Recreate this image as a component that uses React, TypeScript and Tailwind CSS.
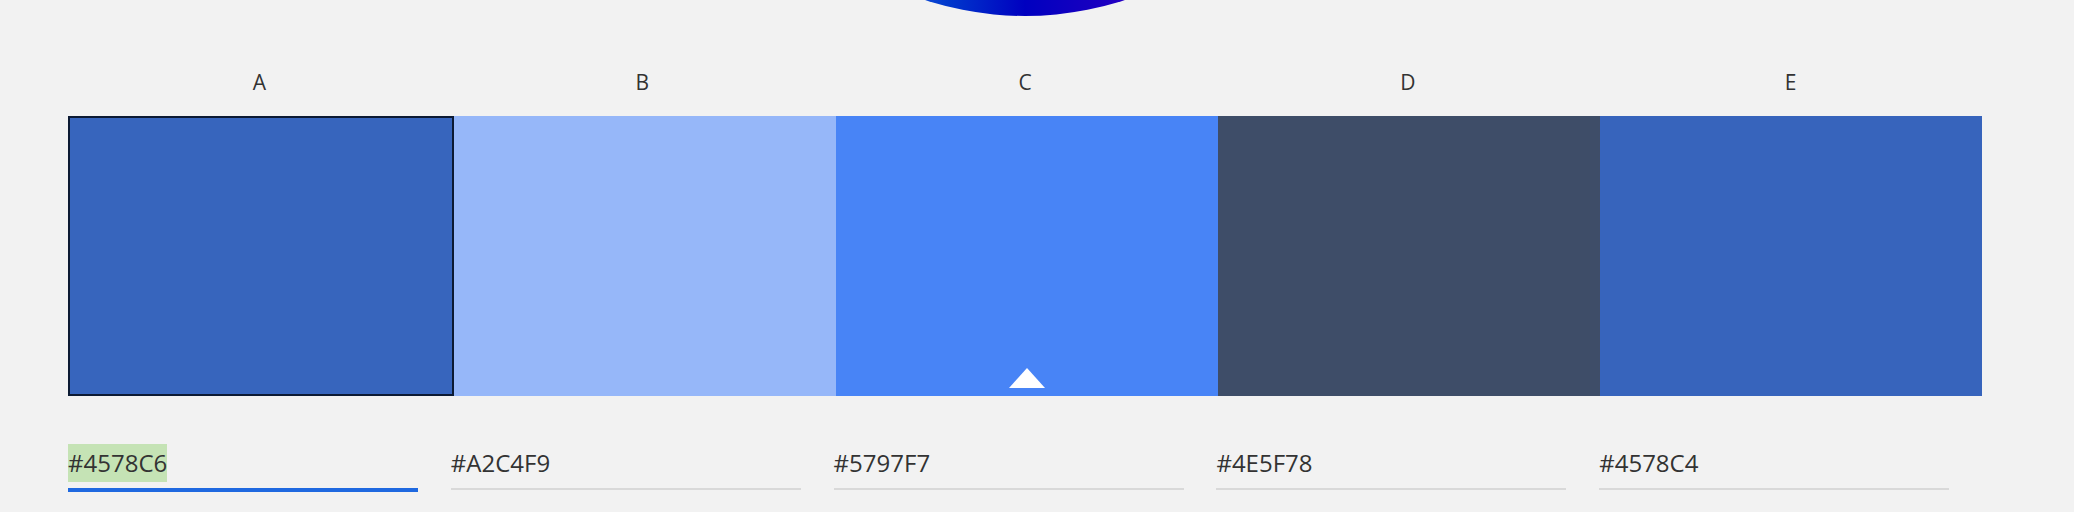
const swatches = [
  { label: "A", color: "bg-[#3765bd]", hex: "#4578C6" },
  { label: "B", color: "bg-[#96b7f9]", hex: "#A2C4F9" },
  { label: "C", color: "bg-[#4884f6]", hex: "#5797F7" },
  { label: "D", color: "bg-[#3e4d68]", hex: "#4E5F78" },
  { label: "E", color: "bg-[#3764bc]", hex: "#4578C4" },
];

const font = { fontFamily: '"Open Sans", "Noto Sans", sans-serif' };

export default function App() {
  return (
    <div className="relative min-h-screen w-full overflow-hidden bg-[#f2f2f2] text-[#333]" style={font}>
      {/* blob peeking in from the top */}
      <div className="pointer-events-none absolute top-[-624px] left-[705px] h-[640px] w-[640px] rounded-full bg-[linear-gradient(90deg,#1a5ae0_30%,#0038cc_38%,#0000c0_50%,#1600c0_60%,#3000c8_70%)]" />

      <div className="relative w-[1982px] pl-[68px]">
        <div className="flex pt-[68px]">
          {swatches.map((s) => (
            <div key={s.label} className="flex-1 text-center text-[21px] leading-[28px]">
              {s.label}
            </div>
          ))}
        </div>

        <div className="mt-[20px] flex h-[280px]">
          {swatches.map((s, i) => (
            <div
              key={s.label}
              className={
                i === 0
                  ? `w-[386px] shrink-0 border-2 border-[#0c1a33] ${s.color}`
                  : `relative flex-1 ${s.color}`
              }
            >
              {i === 2 && (
                <div className="absolute bottom-2 left-1/2 h-0 w-0 -translate-x-1/2 border-r-[18px] border-b-[20px] border-l-[18px] border-r-transparent border-b-white border-l-transparent" />
              )}
            </div>
          ))}
        </div>

        <div className="mt-[48px] flex items-start">
          {swatches.map((s, i) => (
            <div key={s.label} className="flex-1">
              <div
                className={
                  i === 0
                    ? "w-[350px] border-b-4 border-[#1f69e0] pb-[6px]"
                    : "w-[350px] border-b-2 border-[#d9d9d9] pb-[6px]"
                }
              >
                <span
                  className={
                    i === 0
                      ? "inline-block bg-[#c5e3b5] text-[24px] leading-[38px]"
                      : "inline-block text-[24px] leading-[38px]"
                  }
                >
                  {s.hex}
                </span>
              </div>
            </div>
          ))}
        </div>
      </div>
    </div>
  );
}
